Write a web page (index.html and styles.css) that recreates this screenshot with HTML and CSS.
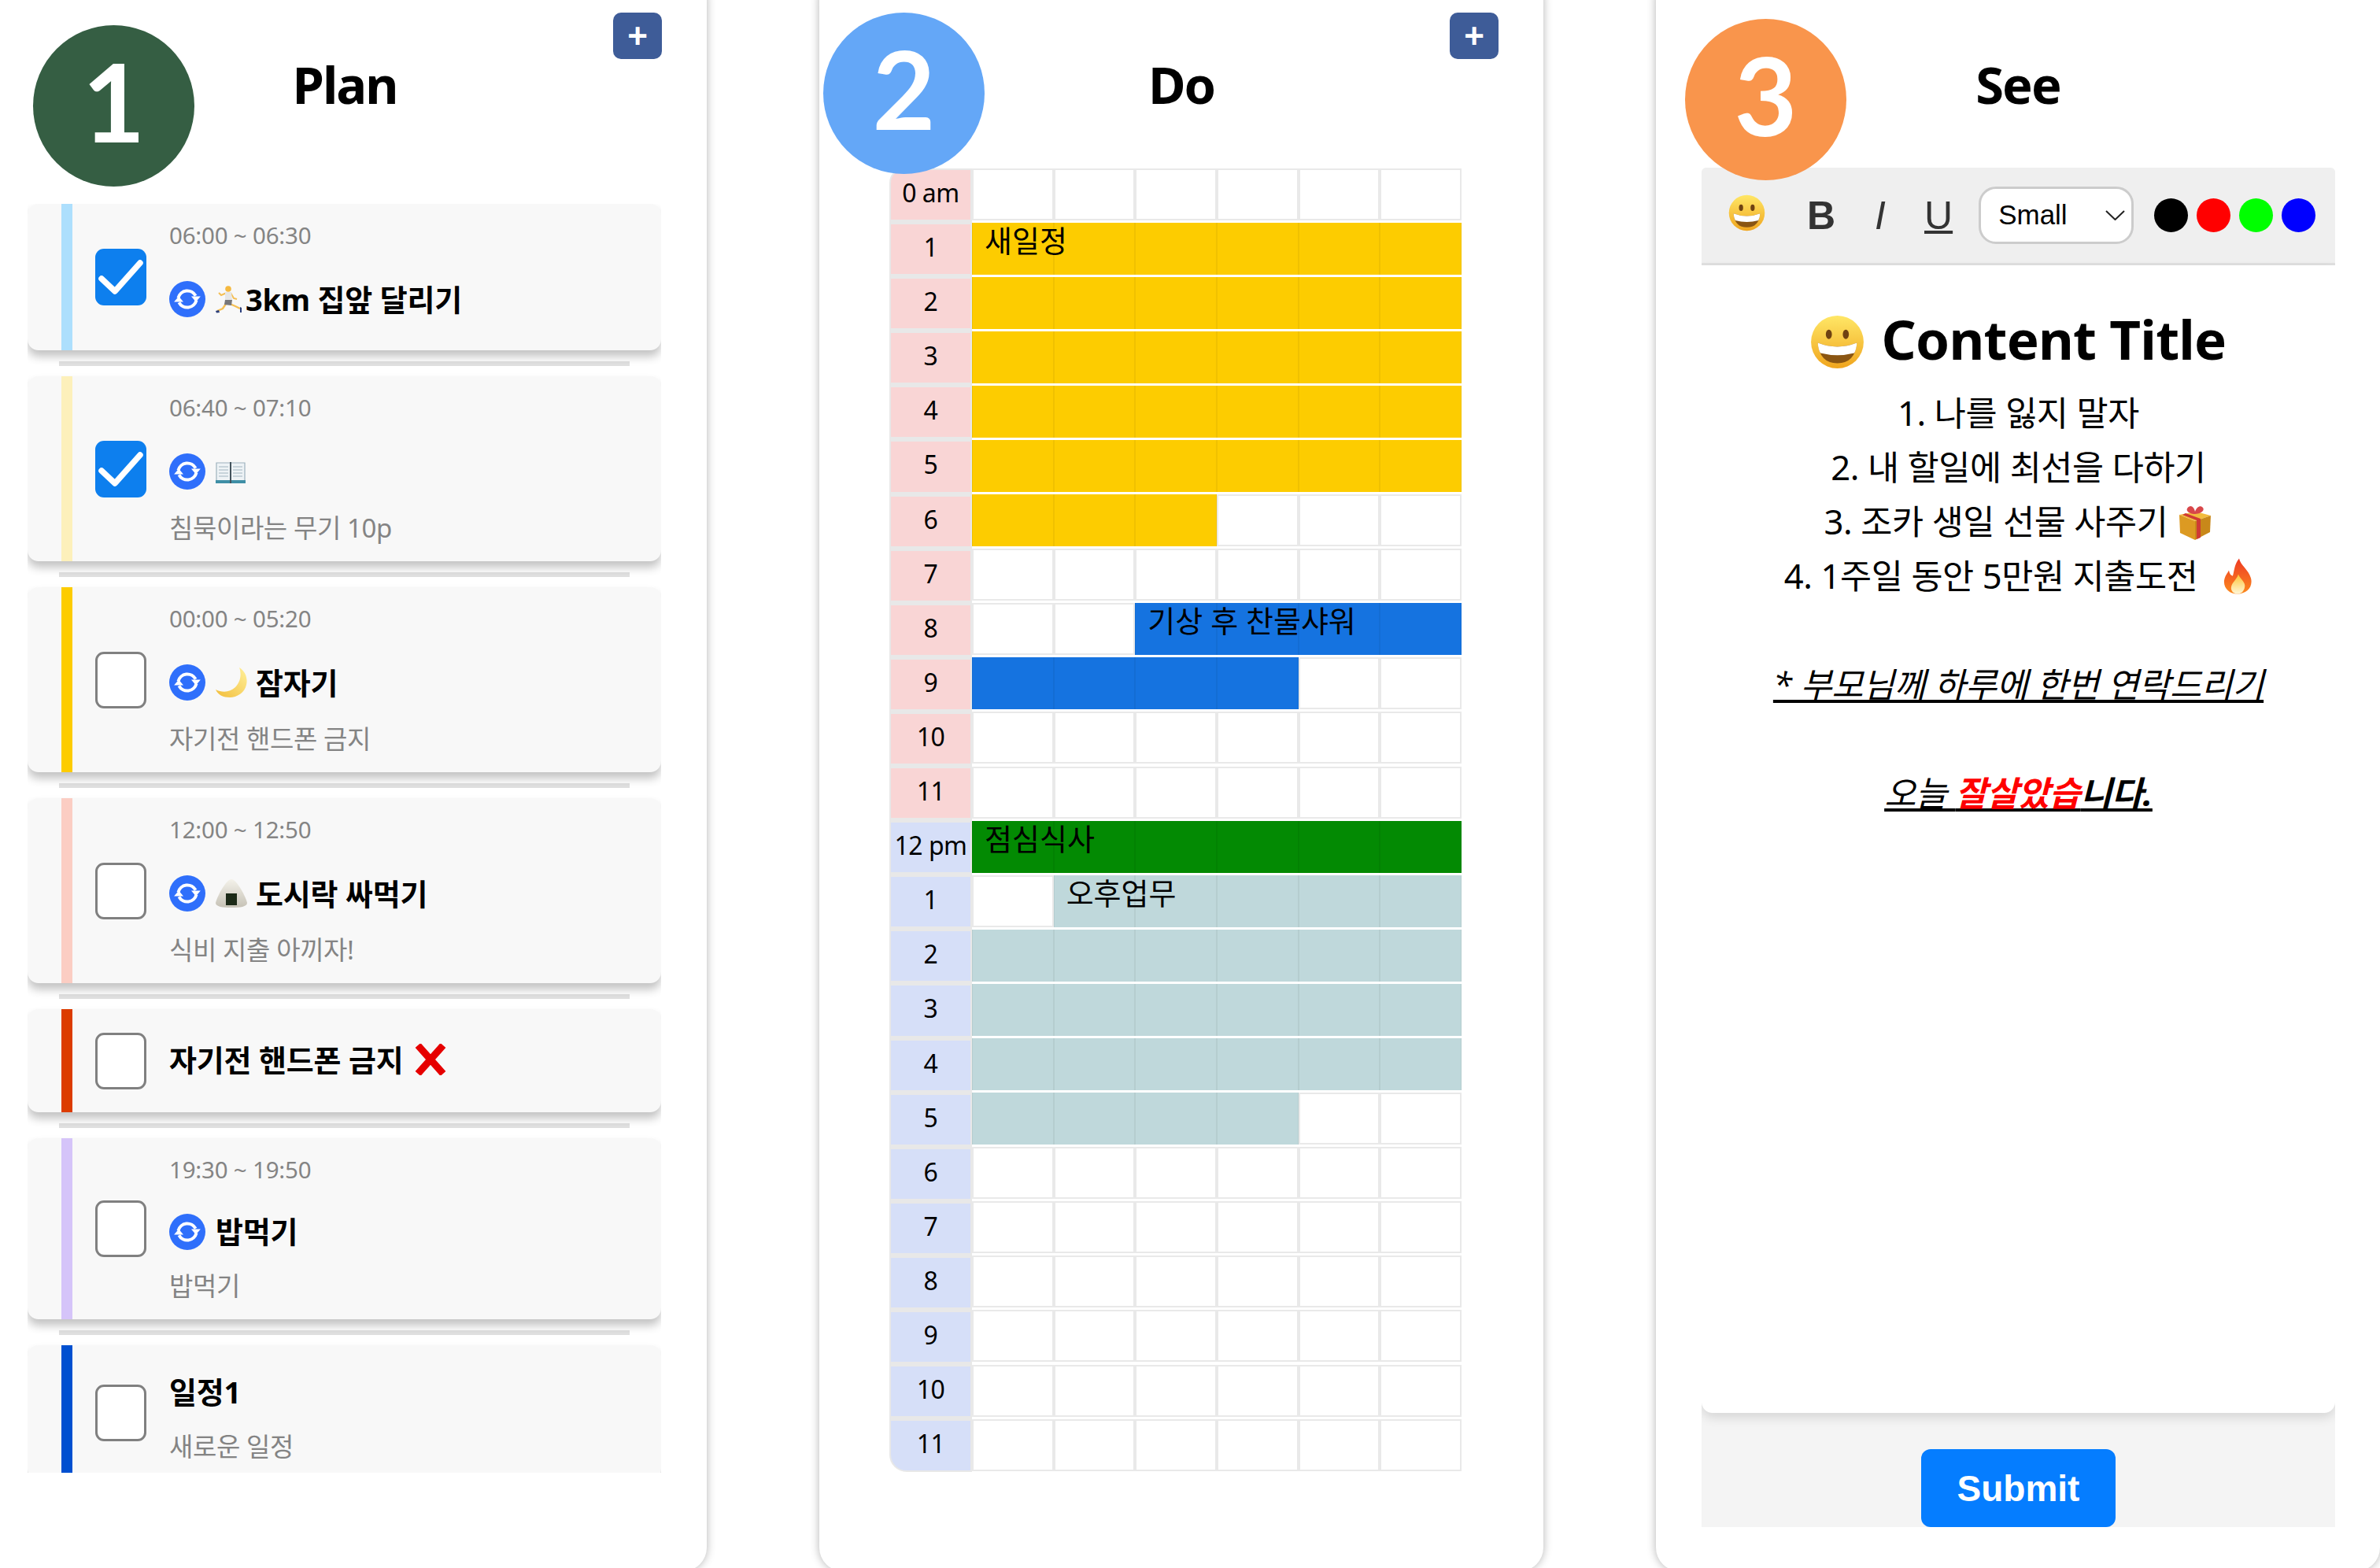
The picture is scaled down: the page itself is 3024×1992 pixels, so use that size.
FILE: index.html
```html
<!DOCTYPE html>
<html lang="ko">
<head>
    <meta charset="UTF-8">
    <title>Plan Do See</title>
    <link rel="stylesheet" href="styles.css">
</head>
<body>

    <!-- shared icons -->
    <svg class="defs" width="0" height="0">
        <defs>
            <linearGradient id="yellow-face" x1="0" y1="0" x2="0" y2="1">
                <stop offset="0" stop-color="#ffe766"/>
                <stop offset="1" stop-color="#f0a51e"/>
            </linearGradient>
            <linearGradient id="moon-fill" x1="1" y1="0" x2="0" y2="1">
                <stop offset="0" stop-color="#fff09a"/>
                <stop offset="1" stop-color="#f2bd3a"/>
            </linearGradient>
            <linearGradient id="rice-fill" x1="0" y1="0" x2="0" y2="1">
                <stop offset="0" stop-color="#f4f2ea"/>
                <stop offset="1" stop-color="#c6c2b6"/>
            </linearGradient>
            <linearGradient id="fire-fill" x1="0" y1="0" x2="0" y2="1">
                <stop offset="0" stop-color="#ee3a24"/>
                <stop offset="1" stop-color="#fb8a1e"/>
            </linearGradient>
            <linearGradient id="fire-core" x1="0" y1="0" x2="0" y2="1">
                <stop offset="0" stop-color="#fdc334"/>
                <stop offset="1" stop-color="#fff7d8"/>
            </linearGradient>
        </defs>
        <symbol id="i-repeat" viewBox="0 0 24 24">
            <circle cx="12" cy="12" r="12" fill="#2f6ffb"/>
            <path d="M6 11.200A6.200 6.200 0 0 1 17.500 9.800" fill="none" stroke="#fff" stroke-width="2.100"/>
            <path d="M14.600 10.200h6.200l-3.100 3.600z" fill="#fff"/>
            <path d="M18 12.800A6.200 6.200 0 0 1 6.500 14.200" fill="none" stroke="#fff" stroke-width="2.100"/>
            <path d="M3.200 13.800h6.200l-3.100-3.600z" fill="#fff"/>
        </symbol>
        <symbol id="i-check" viewBox="0 0 65 72">
            <path d="M8 38L25 54L57 18" fill="none" stroke="#fff" stroke-width="7.500" stroke-linecap="round" stroke-linejoin="round"/>
        </symbol>
        <symbol id="i-grin" viewBox="0 0 64 64">
            <circle cx="32" cy="32" r="31" fill="url(#yellow-face)"/>
            <ellipse cx="22" cy="23" rx="3.600" ry="5.600" fill="#6f4212"/>
            <ellipse cx="42" cy="23" rx="3.600" ry="5.600" fill="#6f4212"/>
            <path d="M9 33Q32 42 55 33Q53 57 32 57Q11 57 9 33Z" fill="#8a5512"/>
            <path d="M9 33Q32 42 55 33Q54.500 41 52 45Q32 50 12 45Q9.500 41 9 33Z" fill="#fff"/>
        </symbol>
        <symbol id="i-runner" viewBox="0 0 34 36">
            <path d="M14 10L7 13L4 10" fill="none" stroke="#f4bf55" stroke-width="2"/>
            <path d="M19 10L23 17L27 18" fill="none" stroke="#f4bf55" stroke-width="2"/>
            <path d="M13 24L9 30L2 33" fill="none" stroke="#f4bf55" stroke-width="2.400"/>
            <path d="M18 24L25 27L31 30" fill="none" stroke="#f4bf55" stroke-width="2.400"/>
            <circle cx="16" cy="5" r="3.800" fill="#f5b93f"/>
            <path d="M12 9H20L21 19L12 19Z" fill="#e6e6e6"/>
            <path d="M12 19H21L20 26L11 25Z" fill="#77777a"/>
            <path d="M0 33L4 32L5 35L1 35.500Z" fill="#2c3f7c"/>
            <path d="M31 28L33 29L33 35L31 35Z" fill="#2c3f7c"/>
        </symbol>
        <symbol id="i-book" viewBox="0 0 38 29">
            <path d="M1 3H19V27H1Z" fill="#eef3f6" stroke="#9db2bd" stroke-width="1.200"/>
            <path d="M19 3H37V27H19Z" fill="#eef3f6" stroke="#9db2bd" stroke-width="1.200"/>
            <path d="M4 8H16M4 12H16M4 16H16M4 20H16M22 8H34M22 12H34M22 16H34M22 20H34" stroke="#bccad2" stroke-width="1.400"/>
            <path d="M0 25H38V29H0Z" fill="#3f8fa6"/>
            <path d="M18 2H20V29H18Z" fill="#43525c"/>
        </symbol>
        <symbol id="i-moon" viewBox="0 0 40 38">
            <path d="M30 0C38 5 41 14 39 22C37 32 27 38 18 38C10 38 3 35 0 28C8 32 18 32 25 25C32 18 33 8 30 0Z" fill="url(#moon-fill)"/>
        </symbol>
        <symbol id="i-rice" viewBox="0 0 40 36">
            <path d="M20 0C27 0 39 24 40 30C40 35 31 36 20 36C9 36 0 35 0 30C1 24 13 0 20 0Z" fill="url(#rice-fill)"/>
            <path d="M13 18H27V33H13Z" fill="#1c2a17"/>
        </symbol>
        <symbol id="i-cross" viewBox="0 0 40 40">
            <path d="M4 2L36 38M36 2L4 38" stroke="#e60000" stroke-width="9"/>
        </symbol>
        <symbol id="i-gift" viewBox="0 0 46 46">
            <path d="M4 14L25 10L44 15L24 22Z" fill="#f2bb3c"/>
            <path d="M4 14L24 22V46L5 37Z" fill="#dc9a22"/>
            <path d="M24 22L44 15L43 36L24 46Z" fill="#c8881a"/>
            <path d="M12 12L31 19V43L26 45V21L8 14Z" fill="#cf3a35"/>
            <path d="M14 6C18 0 23 4 24 10C26 4 31 1 34 5C37 9 30 13 24 13C19 13 12 10 14 6Z" fill="#d8474a"/>
        </symbol>
        <symbol id="i-fire" viewBox="0 0 37 45">
            <path d="M20 0C22 9 32 14 35 25C38 37 29 45 18 45C8 45 0 38 1 28C2 22 5 19 7 15C8 20 10 22 12 22C14 15 14 7 20 0Z" fill="url(#fire-fill)"/>
            <path d="M19 20C21 26 29 30 27 37C26 42 22 45 18 45C13 45 9 41 10 36C11 30 17 27 19 20Z" fill="url(#fire-core)"/>
        </symbol>
    </svg>

    <main class="board">

        <section class="panel panel-plan">
            <div class="badge badge-plan">1</div>
            <button class="add-btn">+</button>
            <h2>Plan</h2>
            <div class="plan-list">
                <div class="card">
                    <span class="stripe sky"></span>
                    <span class="check on"><svg><use href="#i-check"/></svg></span>
                    <div class="card-body">
                        <p class="time">06:00 ~ 06:30</p>
                        <p class="title"><svg class="repeat"><use href="#i-repeat"/></svg><svg class="emoji runner"><use href="#i-runner"/></svg>3km 집앞 달리기</p>
                    </div>
                </div>
                <div class="divider"></div>
                <div class="card">
                    <span class="stripe cream"></span>
                    <span class="check on"><svg><use href="#i-check"/></svg></span>
                    <div class="card-body">
                        <p class="time">06:40 ~ 07:10</p>
                        <p class="title"><svg class="repeat"><use href="#i-repeat"/></svg><svg class="emoji book"><use href="#i-book"/></svg></p>
                        <p class="desc">침묵이라는 무기 10p</p>
                    </div>
                </div>
                <div class="divider"></div>
                <div class="card">
                    <span class="stripe amber"></span>
                    <span class="check"></span>
                    <div class="card-body">
                        <p class="time">00:00 ~ 05:20</p>
                        <p class="title"><svg class="repeat"><use href="#i-repeat"/></svg><svg class="emoji moon"><use href="#i-moon"/></svg>잠자기</p>
                        <p class="desc">자기전 핸드폰 금지</p>
                    </div>
                </div>
                <div class="divider"></div>
                <div class="card">
                    <span class="stripe blush"></span>
                    <span class="check"></span>
                    <div class="card-body">
                        <p class="time">12:00 ~ 12:50</p>
                        <p class="title"><svg class="repeat"><use href="#i-repeat"/></svg><svg class="emoji moon"><use href="#i-rice"/></svg>도시락 싸먹기</p>
                        <p class="desc">식비 지출 아끼자!</p>
                    </div>
                </div>
                <div class="divider"></div>
                <div class="card">
                    <span class="stripe rust"></span>
                    <span class="check"></span>
                    <div class="card-body">
                        <p class="title solo">자기전 핸드폰 금지<svg class="emoji cross"><use href="#i-cross"/></svg></p>
                    </div>
                </div>
                <div class="divider"></div>
                <div class="card">
                    <span class="stripe lilac"></span>
                    <span class="check"></span>
                    <div class="card-body">
                        <p class="time">19:30 ~ 19:50</p>
                        <p class="title plain"><svg class="repeat"><use href="#i-repeat"/></svg>밥먹기</p>
                        <p class="desc">밥먹기</p>
                    </div>
                </div>
                <div class="divider"></div>
                <div class="card">
                    <span class="stripe cobalt"></span>
                    <span class="check"></span>
                    <div class="card-body">
                        <p class="title plain first">일정1</p>
                        <p class="desc">새로운 일정</p>
                    </div>
                </div>
            </div>
        </section>

        <section class="panel panel-do">
            <div class="badge badge-do">2</div>
            <button class="add-btn">+</button>
            <h2>Do</h2>
            <div class="schedule">
                <div class="hours">
                    <div class="hour am">0 am</div>
                    <div class="hour am">1</div>
                    <div class="hour am">2</div>
                    <div class="hour am">3</div>
                    <div class="hour am">4</div>
                    <div class="hour am">5</div>
                    <div class="hour am">6</div>
                    <div class="hour am">7</div>
                    <div class="hour am">8</div>
                    <div class="hour am">9</div>
                    <div class="hour am">10</div>
                    <div class="hour am">11</div>
                    <div class="hour pm">12 pm</div>
                    <div class="hour pm">1</div>
                    <div class="hour pm">2</div>
                    <div class="hour pm">3</div>
                    <div class="hour pm">4</div>
                    <div class="hour pm">5</div>
                    <div class="hour pm">6</div>
                    <div class="hour pm">7</div>
                    <div class="hour pm">8</div>
                    <div class="hour pm">9</div>
                    <div class="hour pm">10</div>
                    <div class="hour pm">11</div>
                </div>
                <div class="slots">
                    <div class="slot"></div><div class="slot"></div><div class="slot"></div><div class="slot"></div><div class="slot"></div><div class="slot"></div>
                    <div class="slot gold named">새일정</div><div class="slot gold"></div><div class="slot gold"></div><div class="slot gold"></div><div class="slot gold"></div><div class="slot gold"></div>
                    <div class="slot gold"></div><div class="slot gold"></div><div class="slot gold"></div><div class="slot gold"></div><div class="slot gold"></div><div class="slot gold"></div>
                    <div class="slot gold"></div><div class="slot gold"></div><div class="slot gold"></div><div class="slot gold"></div><div class="slot gold"></div><div class="slot gold"></div>
                    <div class="slot gold"></div><div class="slot gold"></div><div class="slot gold"></div><div class="slot gold"></div><div class="slot gold"></div><div class="slot gold"></div>
                    <div class="slot gold"></div><div class="slot gold"></div><div class="slot gold"></div><div class="slot gold"></div><div class="slot gold"></div><div class="slot gold"></div>
                    <div class="slot gold"></div><div class="slot gold"></div><div class="slot gold"></div><div class="slot"></div><div class="slot"></div><div class="slot"></div>
                    <div class="slot"></div><div class="slot"></div><div class="slot"></div><div class="slot"></div><div class="slot"></div><div class="slot"></div>
                    <div class="slot"></div><div class="slot"></div><div class="slot blue named">기상 후 찬물샤워</div><div class="slot blue"></div><div class="slot blue"></div><div class="slot blue"></div>
                    <div class="slot blue"></div><div class="slot blue"></div><div class="slot blue"></div><div class="slot blue"></div><div class="slot"></div><div class="slot"></div>
                    <div class="slot"></div><div class="slot"></div><div class="slot"></div><div class="slot"></div><div class="slot"></div><div class="slot"></div>
                    <div class="slot"></div><div class="slot"></div><div class="slot"></div><div class="slot"></div><div class="slot"></div><div class="slot"></div>
                    <div class="slot green named">점심식사</div><div class="slot green"></div><div class="slot green"></div><div class="slot green"></div><div class="slot green"></div><div class="slot green"></div>
                    <div class="slot"></div><div class="slot teal named">오후업무</div><div class="slot teal"></div><div class="slot teal"></div><div class="slot teal"></div><div class="slot teal"></div>
                    <div class="slot teal"></div><div class="slot teal"></div><div class="slot teal"></div><div class="slot teal"></div><div class="slot teal"></div><div class="slot teal"></div>
                    <div class="slot teal"></div><div class="slot teal"></div><div class="slot teal"></div><div class="slot teal"></div><div class="slot teal"></div><div class="slot teal"></div>
                    <div class="slot teal"></div><div class="slot teal"></div><div class="slot teal"></div><div class="slot teal"></div><div class="slot teal"></div><div class="slot teal"></div>
                    <div class="slot teal"></div><div class="slot teal"></div><div class="slot teal"></div><div class="slot teal"></div><div class="slot"></div><div class="slot"></div>
                    <div class="slot"></div><div class="slot"></div><div class="slot"></div><div class="slot"></div><div class="slot"></div><div class="slot"></div>
                    <div class="slot"></div><div class="slot"></div><div class="slot"></div><div class="slot"></div><div class="slot"></div><div class="slot"></div>
                    <div class="slot"></div><div class="slot"></div><div class="slot"></div><div class="slot"></div><div class="slot"></div><div class="slot"></div>
                    <div class="slot"></div><div class="slot"></div><div class="slot"></div><div class="slot"></div><div class="slot"></div><div class="slot"></div>
                    <div class="slot"></div><div class="slot"></div><div class="slot"></div><div class="slot"></div><div class="slot"></div><div class="slot"></div>
                    <div class="slot"></div><div class="slot"></div><div class="slot"></div><div class="slot"></div><div class="slot"></div><div class="slot"></div>
                </div>
            </div>
        </section>

        <section class="panel panel-see">
            <div class="badge badge-see">3</div>
            <h2>See</h2>
            <div class="see-box">
                <div class="toolbar">
                    <svg class="tool-emoji"><use href="#i-grin"/></svg>
                    <span class="tool tool-b">B</span>
                    <span class="tool tool-i">I</span>
                    <span class="tool tool-u">U</span>
                    <div class="size-select">
                        Small
                        <svg class="chevron" viewBox="0 0 25 13"><path d="M1 1L12.500 12L24 1" fill="none" stroke="#222" stroke-width="2"/></svg>
                    </div>
                    <div class="swatches">
                        <span class="swatch black"></span>
                        <span class="swatch red"></span>
                        <span class="swatch lime"></span>
                        <span class="swatch navy"></span>
                    </div>
                </div>
                <div class="editor">
                    <h3><svg class="title-emoji"><use href="#i-grin"/></svg> Content Title</h3>
                    <p>1. 나를 잃지 말자</p>
                    <p>2. 내 할일에 최선을 다하기</p>
                    <p>3. 조카 생일 선물 사주기 <svg class="line-emoji"><use href="#i-gift"/></svg></p>
                    <p>4. 1주일 동안 5만원 지출도전 &nbsp; <svg class="line-emoji fire"><use href="#i-fire"/></svg></p>
                    <p>&nbsp;</p>
                    <p class="note">* 부모님께 하루에 한번 연락드리기</p>
                    <p>&nbsp;</p>
                    <p class="note">오늘 <b class="hot">잘살았습</b><b>니다.</b></p>
                </div>
                <div class="see-footer">
                    <button class="submit-btn">Submit</button>
                </div>
            </div>
        </section>

    </main>

</body>
</html>
```

FILE: styles.css
```css
* {
    box-sizing: border-box;
}
html, body {
    height: 100%;
}
body {
    margin: 0;
    overflow: hidden;
    background: #fff;
    color: #000;
    font-family: "Noto Sans", "Noto Sans CJK KR", sans-serif;
}
p, h2, h3 {
    margin: 0;
}
.defs {
    position: absolute;
}

/* columns */
.board {
    display: flex;
    gap: 143px;
    margin: -30px 0 0 -22px;
}
.panel {
    position: relative;
    flex: none;
    width: 920px;
    height: 2026px;
    padding-top: 30px;
    background: #fff;
    border-radius: 30px;
    box-shadow: 0 0 12px rgba(0, 0, 0, 0.3);
}
.panel h2 {
    margin-top: 67px;
    font-size: 65px;
    line-height: 80px;
    font-weight: 700;
    letter-spacing: -2px;
    text-align: center;
}
.badge {
    position: absolute;
    width: 205px;
    height: 205px;
    border-radius: 50%;
    color: #fff;
    font-family: Lato, sans-serif;
    font-size: 138px;
    font-weight: 700;
    line-height: 192px;
    text-align: center;
}
.badge-plan {
    left: 64px;
    top: 62px;
    background: #355e43;
}
.badge-do {
    left: 5px;
    top: 46px;
    background: #64a7f7;
}
.badge-see {
    left: 37px;
    top: 54px;
    background: #f9954c;
}
.add-btn {
    position: absolute;
    top: 46px;
    right: 57px;
    width: 62px;
    height: 59px;
    padding: 0;
    border: none;
    border-radius: 10px;
    background: #3e5c98;
    color: #fff;
    font-family: "Liberation Sans", sans-serif;
    font-size: 44px;
    font-weight: 700;
    line-height: 54px;
}

/* plan */
.plan-list {
    display: flex;
    flex-direction: column;
    width: 805px;
    height: 1612px;
    margin: 112px 0 0 57px;
    overflow: hidden;
}
.card {
    position: relative;
    flex: none;
    display: flex;
    align-items: center;
    background: #f8f8f8;
    border-radius: 14px;
    box-shadow: 0 8px 12px rgba(0, 0, 0, 0.24);
}
.stripe {
    align-self: stretch;
    flex: none;
    width: 14px;
    margin-left: 43px;
}
.sky { background: #addffd; }
.cream { background: #fdf0bb; }
.amber { background: #fdcc00; }
.blush { background: #fbcdc3; }
.rust { background: #dc3c00; }
.lilac { background: #d5c4f9; }
.cobalt { background: #0050d0; }
.check {
    flex: none;
    width: 65px;
    height: 72px;
    margin: 0 29px;
    background: #fff;
    border: 3px solid #808080;
    border-radius: 11px;
}
.check.on {
    background: #0d7fee;
    border: none;
}
.check svg {
    display: block;
    width: 65px;
    height: 72px;
}
.card-body {
    padding: 18px 0 19px;
}
.time {
    margin-bottom: 35px;
    color: #848484;
    font-size: 29.500px;
    line-height: 44px;
    letter-spacing: -0.2px;
}
.title {
    display: flex;
    align-items: center;
    height: 48px;
    font-size: 38px;
    line-height: 46px;
    font-weight: 700;
    letter-spacing: -0.2px;
    white-space: nowrap;
}
.title:last-child {
    margin-bottom: 22px;
}
.title.plain {
    height: 43px;
    line-height: 43px;
}
.title.first {
    margin-top: 20px;
}
.title.solo {
    margin: 22px 0 24px;
}
.repeat {
    flex: none;
    width: 46px;
    height: 46px;
    margin-right: 13px;
}
.emoji {
    flex: none;
    margin-right: 11px;
}
.runner {
    width: 34px;
    height: 36px;
    margin-right: 4px;
}
.book {
    width: 38px;
    height: 29px;
}
.moon {
    width: 40px;
    height: 38px;
}
.cross {
    width: 40px;
    height: 40px;
    margin: 0 0 0 15px;
}
.desc {
    margin: 26px 0 1px;
    color: #848484;
    font-size: 33px;
    line-height: 44px;
    letter-spacing: -0.4px;
    white-space: nowrap;
}
.divider {
    flex: none;
    height: 6px;
    margin: 14px 40px 13px;
    background: #e0e0e0;
}

/* do */
.schedule {
    display: flex;
    width: 727px;
    margin: 66.500px 0 0 89px;
}
.hours {
    flex: none;
    width: 105px;
    height: 1656px;
    padding: 2.500px 2px 0;
    background: #e8e8e8;
    border-radius: 18px 0 0 22px;
}
.hour {
    height: 63.100px;
    margin-bottom: 6px;
    font-size: 32px;
    line-height: 58px;
    letter-spacing: -0.5px;
    text-align: center;
    white-space: nowrap;
}
.hour:first-child {
    border-top-left-radius: 16px;
}
.hour:last-child {
    margin-bottom: 0;
    border-bottom-left-radius: 20px;
}
.am { background: #f9d5d5; }
.pm { background: #d6dff8; }
.slots {
    flex: 1;
    min-width: 0;
    display: grid;
    grid-template-columns: repeat(6, minmax(0, 1fr));
    grid-template-rows: repeat(24, 66px);
    row-gap: 3.100px;
}
.slot {
    padding-left: 15px;
    background: #fff;
    border: 2px solid #e9e9e9;
    font-size: 38px;
    line-height: 44px;
    white-space: nowrap;
}
.gold, .blue, .green, .teal {
    border-width: 0 1px;
    border-color: rgba(0, 0, 0, 0.05);
}
.gold { background: #fdcc00; }
.blue { background: #1573e0; }
.green { background: #038a03; }
.teal { background: #bfd8db; }
/* the label runs on over the slots to its right */
.named {
    position: relative;
    z-index: 1;
}

/* see */
.see-box {
    display: flex;
    flex-direction: column;
    width: 805px;
    height: 1727px;
    margin: 66px 0 0 58px;
    background: #f4f4f4;
    border-radius: 6px 6px 0 0;
    overflow: hidden;
}
.toolbar {
    flex: none;
    display: flex;
    align-items: center;
    height: 124px;
    padding: 0 26px 0 34px;
    background: #efefef;
    border-bottom: 3px solid #e0e0e0;
}
.tool-emoji {
    flex: none;
    width: 47px;
    height: 47px;
    margin: -6px 53px 0 0;
}
.tool {
    color: #333;
    font-family: "Liberation Sans", sans-serif;
    font-size: 50px;
    line-height: 60px;
}
.tool-b {
    margin-right: 50px;
    font-weight: 700;
}
.tool-i {
    margin-right: 49px;
    font-style: italic;
}
.tool-u {
    margin-right: 33px;
    text-decoration: underline;
    text-decoration-thickness: 4px;
}
.size-select {
    flex: none;
    position: relative;
    width: 197px;
    height: 73px;
    padding-left: 22px;
    background: #fff;
    border: 3px solid #ccc;
    border-radius: 22px;
    font-family: "Liberation Sans", sans-serif;
    font-size: 35px;
    line-height: 66px;
}
.chevron {
    position: absolute;
    top: 27px;
    right: 8px;
    width: 25px;
    height: 13px;
}
.swatches {
    display: flex;
    gap: 11px;
    margin-left: 26px;
}
.swatch {
    width: 43px;
    height: 43px;
    border-radius: 50%;
}
.black { background: #000; }
.red { background: #f00; }
.lime { background: #0f0; }
.navy { background: #00f; }
.editor {
    flex: none;
    height: 1458px;
    padding-top: 53px;
    background: #fff;
    border-radius: 0 0 14px 14px;
    box-shadow: 0 6px 14px rgba(0, 0, 0, 0.12);
    font-size: 43.600px;
    line-height: 69px;
    letter-spacing: -0.4px;
    text-align: center;
    white-space: nowrap;
}
.editor h3 {
    margin-bottom: 20px;
    font-size: 69px;
    line-height: 80px;
    font-weight: 700;
    letter-spacing: -0.8px;
}
.title-emoji {
    width: 69px;
    height: 69px;
    margin-right: 4px;
    vertical-align: -12px;
}
.line-emoji {
    width: 46px;
    height: 46px;
    vertical-align: -7px;
}
.line-emoji.fire {
    width: 37px;
}
.note {
    font-style: italic;
    text-decoration: underline;
}
.hot {
    color: #f00;
}
.see-footer {
    flex: 1;
    display: flex;
    justify-content: center;
    padding-top: 46px;
}
.submit-btn {
    width: 247px;
    height: 99px;
    padding: 0;
    border: none;
    border-radius: 12px;
    background: #057dff;
    color: #fff;
    font-family: "Liberation Sans", sans-serif;
    font-size: 46px;
    font-weight: 700;
}
```
